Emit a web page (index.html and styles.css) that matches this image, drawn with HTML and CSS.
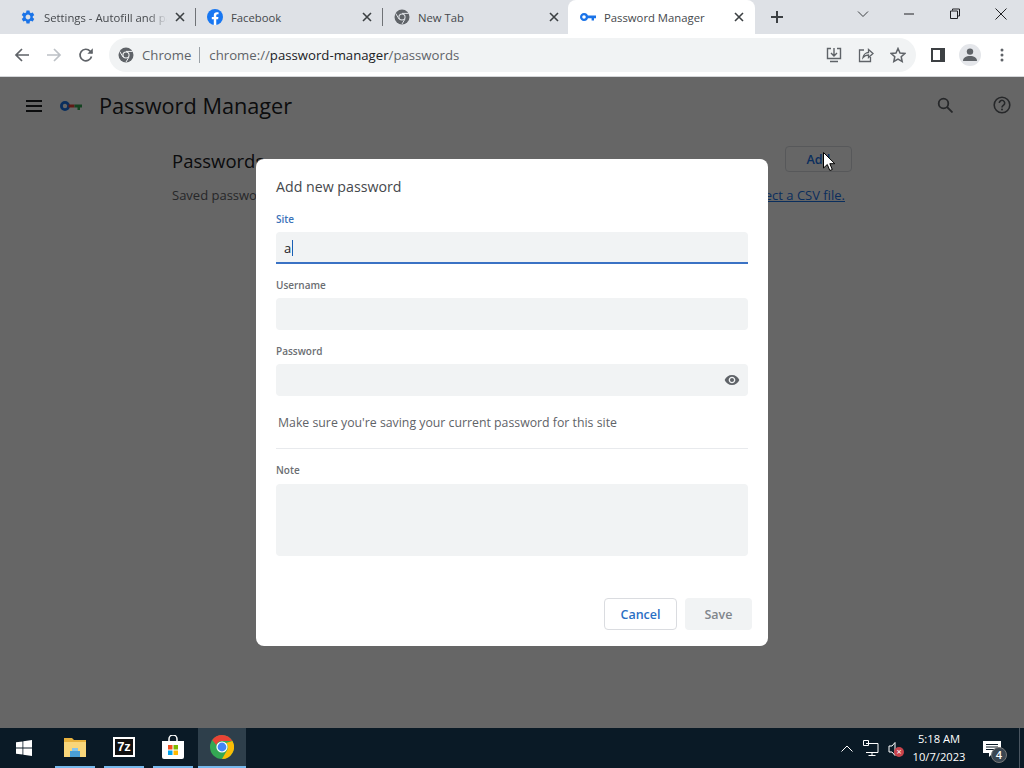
FILE: index.html
```html
<!DOCTYPE html>
<html lang="en">
<head>
<meta charset="utf-8">
<title>Password Manager</title>
<link rel="stylesheet" href="styles.css">
</head>
<body>
<div class="screen">
  <div class="tabstrip">
    <div class="tab">
      <svg class="favicon" viewBox="0 0 24 24" width="16" height="16"><path fill="#1a73e8" d="M19.14 12.94c.04-.3.06-.61.06-.94 0-.32-.02-.64-.07-.94l2.03-1.58a.49.49 0 0 0 .12-.61l-1.92-3.32a.488.488 0 0 0-.59-.22l-2.39.96c-.5-.38-1.03-.7-1.62-.94l-.36-2.54a.484.484 0 0 0-.48-.41h-3.84c-.24 0-.43.17-.47.41l-.36 2.54c-.59.24-1.13.57-1.62.94l-2.39-.96c-.22-.08-.47 0-.59.22L2.74 8.87c-.12.21-.08.47.12.61l2.03 1.58c-.05.3-.09.63-.09.94s.02.64.07.94l-2.03 1.58a.49.49 0 0 0-.12.61l1.92 3.32c.12.22.37.29.59.22l2.39-.96c.5.38 1.03.7 1.62.94l.36 2.54c.05.24.24.41.48.41h3.84c.24 0 .44-.17.47-.41l.36-2.54c.59-.24 1.13-.56 1.62-.94l2.39.96c.22.08.47 0 .59-.22l1.92-3.32c.12-.22.07-.47-.12-.61l-2.01-1.58zM12 15.6c-1.98 0-3.6-1.62-3.6-3.6s1.62-3.6 3.6-3.6 3.6 1.62 3.6 3.6-1.62 3.6-3.6 3.6z"/></svg>
      <span class="tab-title fade">Settings - Autofill and passwords</span>
      <svg class="tab-close" viewBox="0 0 10 10" width="10" height="10"><path d="M1 1l8 8M9 1l-8 8" stroke="#3c4043" stroke-width="1.6" fill="none"/></svg>
    </div>
    <div class="tab-sep"></div>
    <div class="tab">
      <svg class="favicon" viewBox="0 0 16 16" width="16" height="16"><circle cx="8" cy="8" r="8" fill="#1877f2"/><path fill="#fff" d="M11.1 10.3l.35-2.3H9.25V6.5c0-.63.31-1.24 1.3-1.24h1V3.3s-.9-.15-1.77-.15c-1.8 0-2.98 1.1-2.98 3.08V8h-2v2.3h2V16h2.45v-5.7z"/></svg>
      <span class="tab-title">Facebook</span>
      <svg class="tab-close" viewBox="0 0 10 10" width="10" height="10"><path d="M1 1l8 8M9 1l-8 8" stroke="#3c4043" stroke-width="1.6" fill="none"/></svg>
    </div>
    <div class="tab-sep"></div>
    <div class="tab">
      <svg class="favicon" viewBox="0 0 16 16" width="16" height="16"><circle cx="8" cy="8" r="7.5" fill="#5f6368"/><circle cx="8" cy="8" r="3.6" fill="#dee1e6"/><circle cx="8" cy="8" r="2.5" fill="#5f6368"/><path d="M8 4.4h6.6M5 10l-3.3-5.6M10.9 10.2L8 15" stroke="#dee1e6" stroke-width="1"/></svg>
      <span class="tab-title">New Tab</span>
      <svg class="tab-close" viewBox="0 0 10 10" width="10" height="10"><path d="M1 1l8 8M9 1l-8 8" stroke="#3c4043" stroke-width="1.6" fill="none"/></svg>
    </div>
    <div class="tab active">
      <svg class="favicon" viewBox="0 0 16 8" width="16" height="8"><circle cx="4" cy="4" r="2.9" fill="none" stroke="#1a73e8" stroke-width="2.2"/><path d="M6 2.6h10v2.6h-2v2.4h-2.4V5.2H6z" fill="#1a73e8"/></svg>
      <span class="tab-title">Password Manager</span>
      <svg class="tab-close" viewBox="0 0 10 10" width="10" height="10"><path d="M1 1l8 8M9 1l-8 8" stroke="#3c4043" stroke-width="1.6" fill="none"/></svg>
    </div>
    <svg class="newtab" viewBox="0 0 12 12" width="12" height="12"><path d="M6 0v12M0 6h12" stroke="#3c4043" stroke-width="2" fill="none"/></svg>
    <div class="winctl">
      <svg viewBox="0 0 12 12" width="12" height="12"><path d="M1 3.5l5 5 5-5" stroke="#3c4043" stroke-width="1" fill="none"/></svg>
      <svg viewBox="0 0 12 12" width="12" height="12"><path d="M1 6h10" stroke="#202124" stroke-width="1" fill="none"/></svg>
      <svg viewBox="0 0 12 12" width="12" height="12"><path d="M3.5 2.5V1h7v7H9M1.500 3h7v7.500h-7z" stroke="#202124" stroke-width="1" fill="none"/></svg>
      <svg viewBox="0 0 12 12" width="12" height="12"><path d="M.5.5l11 11M11.500.5l-11 11" stroke="#202124" stroke-width="1" fill="none"/></svg>
    </div>
  </div>

  <div class="toolbar">
    <div class="nav">
      <svg viewBox="0 0 16 16" width="16" height="16"><path d="M15 8H2M8 2L2 8l6 6" stroke="#5f6368" stroke-width="1.7" fill="none"/></svg>
      <svg viewBox="0 0 16 16" width="16" height="16"><path d="M1 8h13M8 2l6 6-6 6" stroke="#bdc1c6" stroke-width="1.7" fill="none"/></svg>
      <svg viewBox="0 0 16 16" width="16" height="16"><path d="M13.500 9.500a5.800 5.800 0 1 1-1.300-5.300L14 6" stroke="#5f6368" stroke-width="1.700" fill="none"/><path d="M14.800 1.300v5.400H9.400z" fill="#5f6368"/></svg>
    </div>
    <div class="omnibox">
      <svg class="omni-icon" viewBox="0 0 16 16" width="16" height="16"><circle cx="8" cy="8" r="7.500" fill="#5f6368"/><circle cx="8" cy="8" r="3.600" fill="#f1f3f4"/><circle cx="8" cy="8" r="2.500" fill="#5f6368"/><path d="M8 4.400h6.600M5 10L1.700 4.400M10.900 10.200L8 15" stroke="#f1f3f4" stroke-width="1"/></svg>
      <span class="omni-chip">Chrome</span>
      <span class="omni-sep"></span>
      <span class="url">chrome://<b>password-manager</b>/passwords</span>
      <div class="omni-actions">
        <svg viewBox="0 0 16 16" width="16" height="16"><path d="M5 1.500H1.500v10H14.500v-10H11M8 1v8M5 6l3 3 3-3M4 14.500h8" stroke="#5f6368" stroke-width="1.400" fill="none"/></svg>
        <svg viewBox="0 0 16 16" width="16" height="16"><path d="M6 3H1.500v11.500h11V10M5 10.500C5.500 7.500 8 5.500 10.500 5.500V2.500L15 6.500l-4.500 4V8C8.500 8 6.500 8.800 5 10.500z" stroke="#5f6368" stroke-width="1.300" fill="none"/></svg>
        <svg viewBox="0 0 16 16" width="16" height="16"><path d="M8 1.500l2 4.500 4.800.5-3.600 3.200 1 4.800L8 12.100l-4.200 2.400 1-4.800L1.200 6.500 6 6z" stroke="#5f6368" stroke-width="1.500" fill="none"/></svg>
      </div>
    </div>
    <div class="tool-end">
      <svg viewBox="0 0 14 14" width="14" height="14"><path fill="#3c4043" d="M0 0h14v14H0z"/><path fill="#fff" d="M2 2h7v10H2z"/></svg>
      <div class="avatar">
        <svg viewBox="0 0 14 14" width="14" height="14"><circle cx="7" cy="3.600" r="3.200" fill="#5f6368"/><path d="M0 13c0-3.500 3-5 7-5s7 1.500 7 5z" fill="#5f6368"/></svg>
      </div>
      <svg viewBox="0 0 4 14" width="4" height="14"><circle cx="2" cy="2" r="1.500" fill="#5f6368"/><circle cx="2" cy="7" r="1.500" fill="#5f6368"/><circle cx="2" cy="12" r="1.500" fill="#5f6368"/></svg>
    </div>
  </div>

  <div class="page">
    <header class="pm-header">
      <svg class="hamburger" viewBox="0 0 16 12" width="16" height="12"><path d="M0 1h16M0 6h16M0 11h16" stroke="#202124" stroke-width="2"/></svg>
      <svg class="pm-logo" viewBox="0 0 22 12" width="22" height="12"><circle cx="5" cy="6" r="3.600" fill="none" stroke="#1a73e8" stroke-width="2.800"/><path d="M8.500 4.500h6v3h-6z" fill="#ea4335"/><path d="M14.500 4.500H22v3h-2v2.500h-2.500V7.500h-3z" fill="#34a853"/></svg>
      <h1 class="pm-title">Password Manager</h1>
      <svg class="search" viewBox="0 0 16 16" width="16" height="16"><circle cx="6.500" cy="6.500" r="4.800" fill="none" stroke="#5f6368" stroke-width="1.800"/><path d="M10 10l5.500 5.500" stroke="#5f6368" stroke-width="1.800"/></svg>
      <svg class="help" viewBox="0 0 18 18" width="18" height="18"><circle cx="9" cy="9" r="7.800" fill="none" stroke="#5f6368" stroke-width="1.600"/><path d="M6.300 7a2.700 2.700 0 1 1 4.300 2.200C9.600 10 9 10.300 9 11.500" fill="none" stroke="#5f6368" stroke-width="1.600"/><circle cx="9" cy="13.500" r="1" fill="#5f6368"/></svg>
    </header>
    <section class="pm-main">
      <div class="pm-row">
        <h2 class="pm-heading">Passwords</h2>
        <button class="add-btn">Add</button>
      </div>
      <p class="pm-note"><span>Saved passwords will appear here.</span><span>To import passwords, <a class="csv" href="#">select a CSV file.</a></span></p>
    </section>

    <div class="scrim">
      <div class="dialog">
        <h3 class="dlg-title">Add new password</h3>
        <div class="field">
          <label class="lbl lbl-focus">Site</label>
          <div class="input input-focus"><span>a</span><i class="caret"></i></div>
        </div>
        <div class="field">
          <label class="lbl">Username</label>
          <div class="input"></div>
        </div>
        <div class="field">
          <label class="lbl">Password</label>
          <div class="input input-eye">
            <svg viewBox="0 0 24 24" width="16" height="16"><path fill="#5f6368" d="M12 4.500C7 4.500 2.730 7.610 1 12c1.730 4.390 6 7.500 11 7.500s9.270-3.110 11-7.500c-1.730-4.390-6-7.500-11-7.500zM12 17c-2.760 0-5-2.240-5-5s2.240-5 5-5 5 2.240 5 5-2.240 5-5 5zm0-8c-1.660 0-3 1.340-3 3s1.340 3 3 3 3-1.340 3-3-1.340-3-3-3z"/></svg>
          </div>
        </div>
        <p class="hint">Make sure you're saving your current password for this site</p>
        <div class="divider"></div>
        <div class="field">
          <label class="lbl lbl-note">Note</label>
          <div class="textarea"></div>
        </div>
        <div class="actions">
          <button class="btn btn-cancel">Cancel</button>
          <button class="btn btn-save">Save</button>
        </div>
      </div>
    </div>

    <svg class="pointer" viewBox="0 0 12 19" width="12" height="19"><path d="M.5.500v15.500l3.800-3.500 2.500 6 2.500-1-2.500-5.800h5z" fill="#fff" stroke="#000" stroke-width="1"/></svg>
  </div>

  <footer class="taskbar">
    <div class="start">
      <svg viewBox="0 0 16 16" width="16" height="16"><path fill="#fff" d="M0 2.300l6.500-.9v6.200H0zM7.300 1.300L16 0v7.600H7.300zM0 8.400h6.500v6.200L0 13.700zM7.300 8.400H16V16l-8.700-1.200z"/></svg>
    </div>
    <div class="task">
      <svg viewBox="0 0 22 20" width="22" height="20"><path fill="#e8b23e" d="M0 1h8l2 2h12v17H0z"/><path fill="#f9d67a" d="M0 5h22v15H0z"/><path fill="#4a9fd6" d="M6 14h10v6H6z"/><path fill="#86c5ec" d="M8 11h6v3H8z"/></svg>
    </div>
    <div class="task">
      <div class="sevenz">7z</div>
    </div>
    <div class="task">
      <svg viewBox="0 0 22 24" width="22" height="24"><path d="M7 7V4a4 4 0 0 1 8 0v3" fill="none" stroke="#fff" stroke-width="1.500"/><path fill="#fff" d="M0 6h22v16a2 2 0 0 1-2 2H2a2 2 0 0 1-2-2z"/><path fill="#f25022" d="M6 10h4.500v4.500H6z"/><path fill="#7fba00" d="M11.500 10H16v4.500h-4.500z"/><path fill="#00a4ef" d="M6 15.500h4.500V20H6z"/><path fill="#ffb900" d="M11.500 15.500H16V20h-4.500z"/></svg>
    </div>
    <div class="task task-active">
      <svg viewBox="0 0 24 24" width="24" height="24"><circle cx="12" cy="12" r="12" fill="#34a853"/><path fill="#ea4335" d="M12 0a12 12 0 0 1 10.400 6H12a6 6 0 0 0-5.700 4L2.300 5A12 12 0 0 1 12 0z"/><path fill="#fbbc05" d="M22.400 6A12 12 0 0 1 12 24l5.200-9A6 6 0 0 0 16 8z"/><circle cx="12" cy="12" r="5.600" fill="#fff"/><circle cx="12" cy="12" r="4.400" fill="#4285f4"/></svg>
    </div>
    <div class="tray">
      <svg class="tray-chevron" viewBox="0 0 12 7" width="12" height="7"><path d="M.5 6.500L6 1l5.500 5.500" stroke="#fff" stroke-width="1" fill="none"/></svg>
      <svg viewBox="0 0 16 16" width="16" height="16"><path d="M3 3.500h12v9H3M9 12.500v3M5.500 15.500h7M.5.500h5v5h-5z" stroke="#fff" stroke-width="1" fill="none"/></svg>
      <div class="speaker">
        <svg viewBox="0 0 16 16" width="16" height="16"><path d="M1 5h3l3-3.500v13L4 11H1z" stroke="#fff" stroke-width="1" fill="none"/></svg>
        <span class="mute">×</span>
      </div>
      <div class="clock"><span>5:18 AM</span><span>10/7/2023</span></div>
      <div class="notif">
        <svg viewBox="0 0 18 16" width="18" height="16"><path fill="#fff" d="M0 0h18v12h-8l-4 4v-4H0z"/><path d="M3 3.500h12M3 6h12M3 8.500h8" stroke="#0a1a26" stroke-width="1"/></svg>
        <span class="badge">4</span>
      </div>
      <div class="desk-line"></div>
    </div>
  </footer>
</div>
</body>
</html>
```

FILE: styles.css
```css
* { box-sizing: border-box; }
html, body { margin: 0; padding: 0; }
body { font-family: "Open Sans", "Noto Sans", "Liberation Sans", sans-serif; color: #202124; overflow: hidden; }
.screen { width: 1024px; height: 768px; display: flex; flex-direction: column; overflow: hidden; }

.tabstrip { height: 34px; background: #dee1e6; display: flex; align-items: center; padding-left: 8px; flex: none; }
.tab { width: 187px; height: 34px; display: flex; align-items: center; padding: 0 10px 0 12px; flex: none; }
.tab-sep { width: 1px; height: 18px; background: #6f7276; flex: none; margin-right: -1px; }
.tab.active { background: #fff; border-radius: 8px 8px 0 0; margin-left: -1px; padding-right: 11px; }
.favicon { flex: none; }
.tab-title { font-size: 11.300px; color: #45484c; margin-left: 8px; flex: 1; white-space: nowrap; overflow: hidden; }
.fade { -webkit-mask-image: linear-gradient(to right, #000 85%, transparent 100%); mask-image: linear-gradient(to right, #000 85%, transparent 100%); }
.tab-close { flex: none; margin-left: 8px; }
.newtab { margin-left: 16px; flex: none; }
.winctl { margin-left: auto; display: flex; gap: 34px; padding: 0 17px 6px 0; align-self: center; }

.toolbar { height: 43px; background: #fff; border-bottom: 1px solid #d4d6d9; display: flex; align-items: center; padding: 0 0 0 14px; flex: none; }
.nav { display: flex; gap: 16px; align-items: center; flex: none; }
.omnibox { margin-left: 15px; width: 807px; height: 34px; background: #f1f3f4; border-radius: 17px; display: flex; align-items: center; padding: 0 10px 0 9px; flex: none; }
.omni-chip { font-size: 13.200px; color: #5f6368; margin-left: 8px; }
.omni-sep { width: 1px; height: 16px; background: #9aa0a6; margin: 0 9px 0 8px; }
.url { font-size: 13.200px; color: #5f6368; white-space: nowrap; }
.url b { font-weight: 400; color: #202124; }
.omni-actions { margin-left: auto; display: flex; gap: 16px; align-items: center; }
.tool-end { display: flex; align-items: center; margin-left: 15px; }
.avatar { width: 22px; height: 22px; border-radius: 50%; background: #e4e6ea; display: flex; align-items: center; justify-content: center; margin: 0 19px 0 14px; }

.page { position: relative; flex: 1; background: #fff; }
.pm-header { height: 57px; display: flex; align-items: center; padding: 0 13px 0 26px; }
.hamburger { flex: none; }
.pm-logo { margin-left: 18px; flex: none; }
.pm-title { font-size: 21.700px; font-weight: 400; margin: 0 0 0 17px; }
.search { margin: 0 0 2px auto; }
.help { margin: 0 0 2px 40px; }
.pm-main { padding: 13px 172px 0; }
.pm-row { display: flex; justify-content: space-between; align-items: center; height: 26px; }
.pm-heading { font-size: 18.500px; font-weight: 400; margin: 0; }
.add-btn { width: 67px; height: 26px; margin-top: -2px; background: #fff; border: 1px solid #dadce0; border-radius: 4px; color: #1a73e8; font: 600 12.500px "Open Sans", sans-serif; }
.pm-note { display: flex; justify-content: space-between; margin: 13px 7px 0 0; font-size: 13px; color: #5f6368; white-space: nowrap; }
.csv { color: #1a73e8; }

.scrim { position: absolute; inset: 0; background: rgba(0,0,0,.6); display: flex; align-items: center; justify-content: center; }
.dialog { width: 512px; height: 487px; background: #fff; border-radius: 8px; padding: 16px 20px 0; position: relative; }
.dlg-title { font-size: 14.200px; font-weight: 400; color: #45484c; margin: 0; line-height: 24px; height: 24px; }
.field { display: flex; flex-direction: column; }
.lbl { font-size: 10px; font-weight: 600; color: #6b6e72; line-height: 14px; height: 14px; margin-bottom: 6px; }
.dlg-title + .field { margin-top: 13px; }
.field + .field { margin-top: 14px; }
.lbl-focus { color: #3a72b8; }
.lbl-note { margin-bottom: 7px; }
.input { height: 32px; background: #f1f3f4; border-radius: 4px; display: flex; align-items: center; padding: 0 8px; font-size: 13px; color: #202124; }
.input-focus { border-bottom: 2px solid #3a72c4; border-radius: 4px 4px 0 0; padding-top: 2px; }
.caret { width: 1px; height: 16px; background: #1a5fb4; margin-left: 1px; }
.input-eye { justify-content: flex-end; }
.hint { font-size: 12.300px; color: #5f6368; margin: 18px 0 0 2px; line-height: 18px; }
.divider { height: 1px; background: #e8eaed; margin-top: 16px; }
.divider + .field { margin-top: 14px; }
.textarea { height: 72px; background: #f1f3f4; border-radius: 4px; }
.actions { display: flex; justify-content: flex-end; gap: 8px; margin: 42px -4px 0 0; }
.btn { height: 32px; border-radius: 4px; font: 600 12.500px "Open Sans", sans-serif; }
.btn-cancel { width: 73px; background: #fff; border: 1px solid #dadce0; color: #2a6fc4; }
.btn-save { width: 67px; background: #f1f3f4; border: 0; color: #80868b; }

.pointer { position: absolute; left: 823px; top: 75px; }

.taskbar { height: 40px; background: #0a1a26; display: flex; align-items: stretch; flex: none; color: #fff; }
.start { width: 50px; padding-right: 2px; display: flex; align-items: center; justify-content: center; }
.task { width: 40px; margin: 0 4px 0 5px; display: flex; align-items: center; justify-content: center; border-bottom: 2px solid #76b9ed; }
.task-active { width: 48px; margin: 0 0 0 1px; background: #2e3f4b; }
.sevenz { width: 22px; height: 20px; border: 2px solid #fff; font: 700 13px/16px "Liberation Sans", sans-serif; background: #111; color: #fff; text-align: center; }
.tray { margin-left: auto; display: flex; align-items: center; }
.tray-chevron { margin-right: 10px; }
.speaker { position: relative; width: 16px; height: 16px; margin: 0 0 0 9px; }
.mute { position: absolute; left: 6px; top: 7px; width: 10px; height: 10px; border-radius: 50%; background: #c8434b; color: #fff; font-size: 9px; line-height: 10px; text-align: center; }
.clock { display: flex; flex-direction: column; align-items: center; font-size: 11.200px; line-height: 18px; margin-left: 5px; width: 60px; }
.notif { position: relative; margin-left: 14px; width: 18px; height: 16px; }
.badge { position: absolute; left: 8px; top: 7px; width: 16px; height: 16px; border-radius: 50%; background: #3a4651; border: 1px solid #777; font-size: 11px; font-weight: 600; line-height: 14px; text-align: center; }
.desk-line { width: 1px; height: 40px; background: #4a5560; margin-left: 18px; margin-right: 4px; }
```
